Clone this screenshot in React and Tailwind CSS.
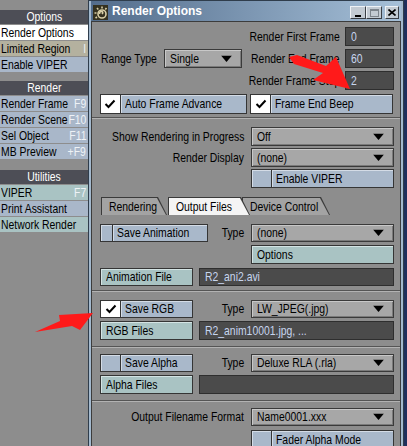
import React from "react";

const font = "font-['Liberation_Sans',Arial,sans-serif]";

// narrow text: the original UI font is a condensed sans
function T({ children, align = "left" }) {
  const origin = align === "right" ? "origin-right" : align === "center" ? "origin-center" : "origin-left";
  return <span className={"inline-block shrink-0 whitespace-nowrap scale-x-[0.8] " + origin}>{children}</span>;
}

function Label({ children, className = "" }) {
  return (
    <div className={"flex-1 min-w-0 flex justify-end pr-[7px] " + className}>
      <T align="right">{children}</T>
    </div>
  );
}

function MenuHeader({ children, className = "" }) {
  return (
    <div className={"h-[14px] flex justify-center items-center bg-[#4d4e56] text-white leading-[14px] " + className}>
      <T align="center">{children}</T>
    </div>
  );
}

function MenuItem({ label, hotkey, bg }) {
  return (
    <div className={"mt-[1px] h-[15px] grid grid-cols-1 items-center pl-[1px] pr-[2px] leading-[15px] text-black overflow-hidden " + bg}>
      <div className="col-start-1 row-start-1 justify-self-start">
        <T>{label}</T>
      </div>
      {hotkey && (
        <div className="col-start-1 row-start-1 justify-self-end text-[#eef2f6]">
          <T align="right">{hotkey}</T>
        </div>
      )}
    </div>
  );
}

function Check() {
  return (
    <svg width="12" height="10" viewBox="0 0 12 10">
      <path d="M1.5 5 L4.5 8 L10.5 1.5" stroke="black" strokeWidth="2" fill="none" />
    </svg>
  );
}

function Arrow() {
  return (
    <svg width="11" height="7" viewBox="0 0 11 7" className="absolute right-[9px] top-1/2 -translate-y-1/2">
      <polygon points="0,0 11,0 5.5,6.5" fill="black" />
    </svg>
  );
}

function Dropdown({ value, className = "" }) {
  return (
    <div className={"relative flex items-center pl-[5px] bg-[#a7a7a7] border border-[#3a3a3a] shadow-[inset_1px_1px_0_#c8c8c8,inset_-1px_-1px_0_#7a7a7a] text-black " + className}>
      <T>{value}</T>
      <Arrow />
    </div>
  );
}

function Field({ value, className = "" }) {
  return (
    <div className={"flex items-center pl-[5px] bg-[#4b4b4b] border border-[#2e2e2e] text-[#c7d5ee] " + className}>
      <T>{value}</T>
    </div>
  );
}

function Toggle({ label, checked, className = "" }) {
  return (
    <div className={"flex border border-[#353535] bg-[#a9b8ca] text-black " + className}>
      <div className={"w-[20px] flex items-center justify-center border-r border-[#353535] " + (checked ? "bg-white" : "bg-[#a9b8ca] shadow-[inset_1px_1px_0_#d4dce6]")}>
        {checked && <Check />}
      </div>
      <div className="flex-1 flex items-center pl-[4px] shadow-[inset_1px_1px_0_#d4dce6]">
        <T>{label}</T>
      </div>
    </div>
  );
}

function Button({ label, className = "" }) {
  return (
    <div className={"flex items-center pl-[5px] border border-[#353535] bg-[#a9c3c3] shadow-[inset_1px_1px_0_#d4e4e4] text-black " + className}>
      <T>{label}</T>
    </div>
  );
}

function Groove({ className = "" }) {
  return (
    <div className={"flex flex-col " + className}>
      <div className="h-[1px] bg-[#555555]" />
      <div className="h-[1px] bg-[#b2b2b2]" />
    </div>
  );
}

function Tab({ label, active, className = "" }) {
  return (
    <div className={"h-[18px] bg-[#3a3a3a] [clip-path:polygon(0_0,calc(100%-9px)_0,100%_100%,0_100%)] pl-[1px] pt-[1px] " + className}>
      <div className={"h-full flex items-center pl-[7px] [clip-path:polygon(0_0,calc(100%-10px)_0,calc(100%-1px)_100%,0_100%)] " + (active ? "bg-[#f4f4f4]" : "bg-[#a3a3a3]")}>
        <T>{label}</T>
      </div>
    </div>
  );
}

function AppIcon() {
  return (
    <svg width="15" height="15" viewBox="0 0 15 15">
      <rect width="15" height="15" fill="#34311f" />
      <g stroke="#d8cfa6" fill="none" strokeWidth="1.6">
        <circle cx="9" cy="9" r="4" />
        <path d="M9 9 Q10.5 7.5 9 6.5 Q6.5 6 6.5 9" />
        <path d="M9 1.5 V3.5 M4 3 L5.3 4.5 M1.5 8 H3.5 M2.5 13 L4 12 M13.5 3 L12.3 4.5" />
      </g>
    </svg>
  );
}

function WinButton({ children, className = "" }) {
  return (
    <div className={"h-[13px] flex items-center justify-center bg-[#c3cbd3] border-t border-l border-[#eef2f6] border-r border-b border-r-[#3a3f46] border-b-[#3a3f46] " + className}>
      {children}
    </div>
  );
}

export default function App() {
  return (
    <div className={"w-[407px] h-[446px] overflow-hidden relative flex bg-[#8d8d8d] text-[13px] " + font}>
      {/* left menu */}
      <div className="w-[88px] shrink-0 pt-[10px]">
        <MenuHeader>Options</MenuHeader>
        <MenuItem label="Render Options" bg="bg-white" />
        <MenuItem label="Limited Region" hotkey="l" bg="bg-[#b4b19f]" />
        <MenuItem label="Enable VIPER" bg="bg-[#a9b7c9]" />

        <MenuHeader className="mt-[9px]">Render</MenuHeader>
        <MenuItem label="Render Frame" hotkey="F9" bg="bg-[#a9b7c9]" />
        <MenuItem label="Render Scene" hotkey="F10" bg="bg-[#a9b7c9]" />
        <MenuItem label="Sel Object" hotkey="F11" bg="bg-[#a9b7c9]" />
        <MenuItem label="MB Preview" hotkey="+F9" bg="bg-[#a9b7c9]" />

        <MenuHeader className="mt-[11px]">Utilities</MenuHeader>
        <MenuItem label="VIPER" hotkey="F7" bg="bg-[#a9c3c3]" />
        <MenuItem label="Print Assistant" bg="bg-[#a9b7c9]" />
        <MenuItem label="Network Render" bg="bg-[#a9c3c3]" />
      </div>

      {/* window area */}
      <div className="flex-1 flex flex-col">
        <div className="h-[4px] bg-[#4a4a4a]" />
        <div className="flex-1 flex">
          <div className="w-[316px] flex flex-col border border-[#2f3d4c] border-b-0 bg-[#a3b9ce] px-[2px]">
            {/* title bar */}
            <div className="h-[20px] flex items-end pb-[1px] pl-[2px] pr-[2px] bg-gradient-to-r from-[#536d8c] to-[#a6c0d8]">
              <AppIcon />
              <span className="ml-[4px] mb-[1px] text-white font-bold text-[12px] leading-[15px]">Render Options</span>
              <div className="ml-auto flex items-center mb-[1px]">
                <WinButton className="w-[16px]">
                  <div className="w-[6px] h-[2px] bg-black mt-[6px]" />
                </WinButton>
                <WinButton className="w-[16px]">
                  <div className="w-[9px] h-[8px] border border-[#7c848c] border-t-2" />
                </WinButton>
                <WinButton className="w-[14px] ml-[3px]">
                  <svg width="8" height="7" viewBox="0 0 8 7">
                    <path d="M0.5 0.5 L7.5 6.5 M7.5 0.5 L0.5 6.5" stroke="black" strokeWidth="1.6" />
                  </svg>
                </WinButton>
              </div>
            </div>

            {/* content */}
            <div className="flex-1 border border-[#3c3c3c] border-b-0 bg-[#8d8d8d] text-black">
              <div className="pl-[8px] pr-[6px] pt-[5px] flex flex-col gap-[3px]">
                <div className="h-[19px] flex items-center">
                  <Label className="!pr-[5px]">Render First Frame</Label>
                  <Field value="0" className="w-[49px] h-full" />
                </div>
                <div className="h-[19px] flex items-center">
                  <span className="w-[64px] pl-[1px]"><T>Range Type</T></span>
                  <Dropdown value="Single" className="w-[78px] h-full" />
                  <Label className="!pr-[5px]">Render End Frame</Label>
                  <Field value="60" className="w-[49px] h-full" />
                </div>
                <div className="h-[19px] flex items-center">
                  <Label className="!pr-[5px]">Render Frame Step</Label>
                  <Field value="2" className="w-[49px] h-full" />
                </div>
                <div className="h-[20px] mt-[1px] flex gap-[3px]">
                  <Toggle label="Auto Frame Advance" checked className="w-[147px]" />
                  <Toggle label="Frame End Beep" checked className="w-[143px]" />
                </div>
              </div>

              <Groove className="mt-[3px]" />

              <div className="pl-[8px] pr-[6px] pt-[8px] flex flex-col gap-[2px]">
                <div className="h-[19px] flex items-center">
                  <Label>Show Rendering in Progress</Label>
                  <Dropdown value="Off" className="w-[143px] h-full" />
                </div>
                <div className="h-[19px] flex items-center">
                  <Label>Render Display</Label>
                  <Dropdown value="(none)" className="w-[143px] h-full" />
                </div>
                <div className="h-[19px] flex justify-end">
                  <Toggle label="Enable VIPER" className="w-[143px]" />
                </div>
              </div>

              {/* tabs */}
              <div className="mt-[9px] pl-[9px] flex">
                <Tab label="Rendering" className="w-[66px]" />
                <Tab label="Output Files" active className="w-[82px] ml-[1px] relative z-10" />
                <Tab label="Device Control" className="w-[88px] -ml-[8px]" />
              </div>

              <div className="pl-[8px] pr-[6px] pt-[9px] flex flex-col">
                <div className="h-[18px] flex items-center">
                  <Toggle label="Save Animation" className="w-[108px] h-full" />
                  <Label>Type</Label>
                  <Dropdown value="(none)" className="w-[143px] h-full" />
                </div>
                <div className="h-[19px] mt-[3px] flex justify-end">
                  <Button label="Options" className="w-[143px]" />
                </div>
                <div className="h-[18px] mt-[4px] flex gap-[6px]">
                  <Button label="Animation File" className="w-[93px]" />
                  <Field value="R2_ani2.avi" className="flex-1" />
                </div>
              </div>

              <Groove className="mt-[4px]" />

              <div className="pl-[8px] pr-[6px] pt-[8px] flex flex-col">
                <div className="h-[18px] flex items-center">
                  <Toggle label="Save RGB" checked className="w-[93px] h-full" />
                  <Label>Type</Label>
                  <Dropdown value="LW_JPEG(.jpg)" className="w-[143px] h-full" />
                </div>
                <div className="h-[19px] mt-[3px] flex gap-[6px]">
                  <Button label="RGB Files" className="w-[93px]" />
                  <Field value="R2_anim10001.jpg, ..." className="flex-1" />
                </div>
              </div>

              <Groove className="mt-[6px]" />

              <div className="pl-[8px] pr-[6px] pt-[6px] flex flex-col">
                <div className="h-[18px] flex items-center">
                  <Toggle label="Save Alpha" className="w-[93px] h-full" />
                  <Label>Type</Label>
                  <Dropdown value="Deluxe RLA (.rla)" className="w-[143px] h-full" />
                </div>
                <div className="h-[19px] mt-[3px] flex gap-[6px]">
                  <Button label="Alpha Files" className="w-[93px]" />
                  <Field value="" className="flex-1" />
                </div>
              </div>

              <Groove className="mt-[6px]" />

              <div className="pl-[8px] pr-[6px] pt-[6px] flex flex-col">
                <div className="h-[18px] flex items-center">
                  <Label>Output Filename Format</Label>
                  <Dropdown value="Name0001.xxx" className="w-[143px] h-full" />
                </div>
                <div className="h-[19px] mt-[4px] flex justify-end">
                  <Toggle label="Fader Alpha Mode" className="w-[143px]" />
                </div>
              </div>
            </div>
          </div>
          <div className="flex-1 bg-[#1f2f5c]" />
        </div>
      </div>

      {/* annotation arrows */}
      <svg width="407" height="446" viewBox="0 0 407 446" className="absolute left-0 top-0 pointer-events-none">
        <polygon points="289,57 297,55 326,66 336,57 350,89 313,80 323,73 294,64" fill="#ff1a1a" />
        <polygon points="35,332 60,321 59,315 93,313 80,330 72,326" fill="#ff1a1a" />
      </svg>
    </div>
  );
}
